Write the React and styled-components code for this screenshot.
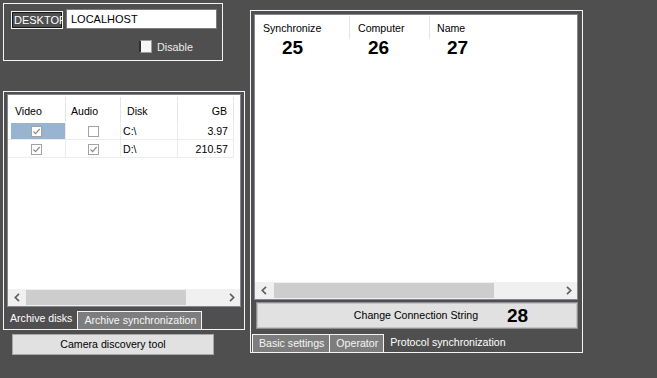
import React from "react";
import styled, { createGlobalStyle } from "styled-components";

const disks = [
  { video: true, audio: false, disk: "C:\\", gb: "3.97", selected: true },
  { video: true, audio: true, disk: "D:\\", gb: "210.57" },
];

const syncColumns = [
  { title: "Synchronize", num: 25, width: 95, indent: 27, sep: true },
  { title: "Computer", num: 26, width: 80, indent: 18, sep: true },
  { title: "Name", num: 27, width: 80, indent: 17 },
];

function Chevron({ dir }) {
  return (
    <svg width="6" height="9" viewBox="0 0 6 9">
      <path
        d={dir === "left" ? "M5 0.8 L1.3 4.5 L5 8.2" : "M1 0.8 L4.7 4.5 L1 8.2"}
        fill="none"
        stroke="#5f5f5f"
        strokeWidth="1.7"
      />
    </svg>
  );
}

function Check({ checked }) {
  return (
    <CheckBox>
      {checked && (
        <svg width="9" height="9" viewBox="0 0 9 9">
          <path d="M1.5 4.5 L3.6 6.6 L7.6 2" fill="none" stroke="#8c8c8c" strokeWidth="1.2" />
        </svg>
      )}
    </CheckBox>
  );
}

function HScroll({ thumb, offset }) {
  return (
    <ScrollBar>
      <ScrollArrow><Chevron dir="left" /></ScrollArrow>
      <Thumb $offset={offset} style={{ width: thumb }} />
      <ScrollTrack />
      <ScrollArrow><Chevron dir="right" /></ScrollArrow>
    </ScrollBar>
  );
}

export default function App() {
  return (
    <>
      <GlobalStyle />
      <Page>
        <LeftColumn>
          <TopPanel>
            <HostRow>
              <NameTag>DESKTOP</NameTag>
              <HostField>LOCALHOST</HostField>
            </HostRow>
            <DisableRow>
              <DisableBox />
              <span>Disable</span>
            </DisableRow>
          </TopPanel>

          <ArchivePanel>
            <ListBox>
              <DiskRow $head>
                <HeadCell>Video</HeadCell>
                <HeadCell $pad={5}>Audio</HeadCell>
                <HeadCell $pad={6}>Disk</HeadCell>
                <HeadCell $right>GB</HeadCell>
              </DiskRow>
              {disks.map((d) => (
                <DiskRow key={d.disk}>
                  <CheckCell $selected={d.selected}><Check checked={d.video} /></CheckCell>
                  <CheckCell><Check checked={d.audio} /></CheckCell>
                  <TextCell>{d.disk}</TextCell>
                  <TextCell $right>{d.gb}</TextCell>
                </DiskRow>
              ))}
              <ListFill />
              <HScroll thumb={160} offset={1} />
            </ListBox>
            <TabRow>
              <ActiveTab>Archive disks</ActiveTab>
              <Tab $gap={1}>Archive synchronization</Tab>
            </TabRow>
          </ArchivePanel>

          <CameraButton>Camera discovery tool</CameraButton>
        </LeftColumn>

        <SyncPanel>
          <SyncList>
            <SyncHeader>
              {syncColumns.map((c) => (
                <SyncColumn key={c.title} style={{ width: c.width }}>
                  <SyncTitle $sep={c.sep}>{c.title}</SyncTitle>
                  <Marker $indent={c.indent}>{c.num}</Marker>
                </SyncColumn>
              ))}
            </SyncHeader>
            <ListFill />
            <HScroll thumb={220} offset={2} />
          </SyncList>
          <ConnectButton>
            Change Connection String
            <ButtonMarker>28</ButtonMarker>
          </ConnectButton>
          <TabRow $bottom>
            <Tab>Basic settings</Tab>
            <Tab $gap={-1}>Operator</Tab>
            <ActiveTab $wide>Protocol synchronization</ActiveTab>
          </TabRow>
        </SyncPanel>
      </Page>
    </>
  );
}

const GlobalStyle = createGlobalStyle`
  html, body {
    margin: 0;
    height: 100%;
    background: #4f4f4f;
  }
  body {
    font-family: "Liberation Sans", Arial, sans-serif;
    font-size: 10.6px;
    color: #000;
  }
  #root { height: 100%; }
`;

const Page = styled.div`
  display: flex;
  align-items: flex-start;
  gap: 5px;
  padding: 3px 0 0 3px;
`;

const LeftColumn = styled.div`
  display: flex;
  flex-direction: column;
  width: 242px;
`;

const TopPanel = styled.div`
  box-sizing: border-box;
  width: 220px;
  height: 58px;
  border: 1px solid #f4f4f4;
  padding: 5px 0 0 7px;
`;

const HostRow = styled.div`
  display: flex;
  align-items: center;
  height: 20px;
`;

const NameTag = styled.div`
  box-sizing: border-box;
  width: 52px;
  height: 18px;
  margin-top: 1px;
  border: 1px solid #f4f4f4;
  box-shadow: inset 0 0 0 1px #151515;
  padding-left: 2px;
  color: #fff;
  font-size: 11px;
  line-height: 16px;
  white-space: nowrap;
  overflow: hidden;
`;

const HostField = styled.div`
  box-sizing: border-box;
  width: 151px;
  height: 20px;
  margin-left: 3px;
  border: 1px solid #7c7c7c;
  background: #fff;
  padding-left: 4px;
  font-size: 11px;
  line-height: 18px;
`;

const DisableRow = styled.div`
  display: flex;
  align-items: center;
  gap: 5px;
  margin: 11px 0 0 128px;
  color: #ececec;
  font-size: 10.8px;
`;

const DisableBox = styled.div`
  box-sizing: border-box;
  width: 13px;
  height: 13px;
  background: #f6f6f6;
  border: 1px solid #9a9a9a;
  border-left: 2px solid #2e2e2e;
`;

const ArchivePanel = styled.div`
  box-sizing: border-box;
  display: flex;
  flex-direction: column;
  width: 242px;
  height: 239px;
  margin-top: 30px;
  border: 1px solid #f4f4f4;
  padding: 2px 3px 0 3px;
`;

const ListBox = styled.div`
  box-sizing: border-box;
  display: flex;
  flex-direction: column;
  height: 213px;
  border: 1px solid #828790;
  background: #fff;
`;

const DiskRow = styled.div`
  display: grid;
  grid-template-columns: 58px 55px 57px 56px;
  height: ${(p) => (p.$head ? "27px" : "18px")};
  ${(p) => !p.$head && "box-shadow: inset 0 -1px 0 #ececec; width: 226px;"}
`;

const HeadCell = styled.div`
  display: flex;
  align-items: center;
  justify-content: ${(p) => (p.$right ? "flex-end" : "flex-start")};
  padding: 3px ${(p) => (p.$right ? 6 : 0)}px 0 ${(p) => (p.$right ? 0 : p.$pad ?? 7)}px;
  margin-top: 2px;
  border-right: 1px solid #e5e5e5;
`;

const CheckCell = styled.div`
  display: flex;
  align-items: center;
  justify-content: center;
  border-right: 1px solid #ececec;
  background: ${(p) => (p.$selected ? "#99b4d1" : "transparent")};
  margin: ${(p) => (p.$selected ? "1px 0 1px 3px" : "0")};
  padding-right: ${(p) => (p.$selected ? "3px" : "0")};
`;

const CheckBox = styled.div`
  box-sizing: border-box;
  display: flex;
  align-items: center;
  justify-content: center;
  width: 11px;
  height: 11px;
  border: 1px solid #a3a3a3;
  background: #fff;
`;

const TextCell = styled.div`
  display: flex;
  align-items: center;
  justify-content: ${(p) => (p.$right ? "flex-end" : "flex-start")};
  padding: ${(p) => (p.$right ? "0 5px 0 0" : "0 0 0 2px")};
  border-right: 1px solid #ececec;
`;

const ListFill = styled.div`
  flex: 1;
`;

const ScrollBar = styled.div`
  display: flex;
  align-items: center;
  height: 17px;
  background: #f0f0f0;
`;

const ScrollArrow = styled.div`
  display: flex;
  align-items: center;
  justify-content: center;
  width: 17px;
  height: 17px;
`;

const Thumb = styled.div`
  height: 15px;
  margin-left: ${(p) => p.$offset}px;
  background: #cdcdcd;
`;

const ScrollTrack = styled.div`
  flex: 1;
`;

const TabRow = styled.div`
  display: flex;
  align-items: flex-end;
  ${(p) => (p.$bottom ? "height: 18px; margin-top: 5px;" : "flex: 1; padding-left: 0;")}
`;

const Tab = styled.div`
  box-sizing: border-box;
  height: 18px;
  margin-left: ${(p) => p.$gap ?? 0}px;
  padding: 0 5px 0 6px;
  border: 1px solid #f4f4f4;
  border-bottom: none;
  background: #7d7d7d;
  color: #f6f6f6;
  line-height: 17px;
  white-space: nowrap;
`;

const ActiveTab = styled.div`
  height: 20px;
  padding: ${(p) => (p.$wide ? "0 0 0 6px" : "0 4px 0 3px")};
  color: #fff;
  line-height: ${(p) => (p.$wide ? "16px" : "19px")};
  white-space: nowrap;
  align-self: ${(p) => (p.$wide ? "flex-start" : "auto")};
`;

const CameraButton = styled.div`
  box-sizing: border-box;
  width: 202px;
  height: 21px;
  margin: 4px 0 0 9px;
  border: 1px solid #a8a8a8;
  background: #e1e1e1;
  text-align: center;
  line-height: 19px;
`;

const SyncPanel = styled.div`
  box-sizing: border-box;
  display: flex;
  flex-direction: column;
  width: 333px;
  height: 343px;
  margin-top: 7px;
  border: 1px solid #f4f4f4;
  padding: 3px 4px 0 1px;
`;

const SyncList = styled.div`
  box-sizing: border-box;
  display: flex;
  flex-direction: column;
  height: 286px;
  margin-left: 2px;
  border: 1px solid #828790;
  background: #fff;
`;

const SyncHeader = styled.div`
  display: flex;
`;

const SyncColumn = styled.div`
  display: flex;
  flex-direction: column;
`;

const SyncTitle = styled.div`
  height: 23px;
  margin-top: 1px;
  padding: 6px 0 0 ${(p) => (p.$sep ? 8 : 7)}px;
  box-sizing: border-box;
  border-right: ${(p) => (p.$sep ? "1px solid #e5e5e5" : "none")};
`;

const Marker = styled.div`
  padding-left: ${(p) => p.$indent}px;
  font-size: 19px;
  font-weight: bold;
  line-height: 17px;
  margin-top: 0;
`;

const ConnectButton = styled.div`
  position: relative;
  box-sizing: border-box;
  width: 322px;
  height: 27px;
  margin: 2px 0 0 4px;
  border: 1px solid #8f8f8f;
  box-shadow: inset 0 0 0 1px #c4c4c4;
  background: #e1e1e1;
  text-align: center;
  line-height: 25px;
  padding-right: 2px;
`;

const ButtonMarker = styled.span`
  position: absolute;
  left: 250px;
  top: 0;
  font-size: 19px;
  font-weight: bold;
  line-height: 25px;
`;
